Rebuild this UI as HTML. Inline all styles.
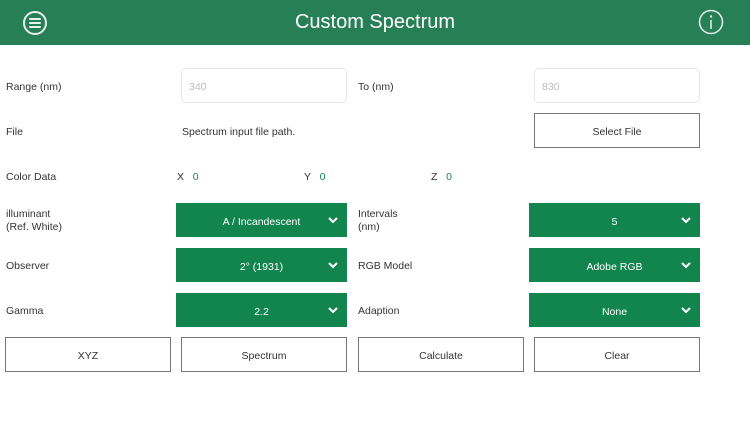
<!DOCTYPE html>
<html><head><style>
body{margin:0;width:750px;height:422px;background:#fff;font-family:"Liberation Sans",sans-serif;position:relative;overflow:hidden;color:#333}
.a{position:absolute;box-sizing:border-box}
.hdr{left:0;top:0;width:750px;height:45px;background:#277f55}
.t{color:#fff;font-size:20px;left:0;width:750px;text-align:center;top:11px;font-weight:300}
.l{font-size:10.5px;color:#333}
.in{border:1px solid #e6e6e6;border-radius:5px;font-size:10.5px;color:#bbb;padding:12px 0 0 7px}
.dd{background:#12854f;color:#fff;font-size:10.5px;text-align:center;line-height:34px;height:34px;padding-top:2px}
.dd svg{position:absolute;right:9px;top:13px}
.bt{border:1px solid #777;font-size:10.5px;text-align:center;height:35px;line-height:33px;color:#333;padding-top:2px}
.g{color:#12854f}
</style></head><body>
<div class="a hdr"></div>
<div class="a t">Custom Spectrum</div>
<svg class="a" style="left:22px;top:10px" width="26" height="26" viewBox="0 0 26 26"><circle cx="13" cy="13" r="11" fill="none" stroke="#e8f2ec" stroke-width="2"/><path d="M8 9h10M8 13h10M8 17h10" stroke="#e8f2ec" stroke-width="2" stroke-linecap="round"/></svg>
<svg class="a" style="left:698px;top:9px" width="26" height="26" viewBox="0 0 26 26"><circle cx="13" cy="13" r="11.5" fill="none" stroke="#e8f2ec" stroke-width="1.5"/><circle cx="13" cy="7.5" r="1.2" fill="#e8f2ec"/><path d="M13 11v9" stroke="#e8f2ec" stroke-width="1.5"/></svg>

<div class="a l" style="left:6px;top:81px">Range (nm)</div>
<div class="a in" style="left:181px;top:68px;width:166px;height:35px">340</div>
<div class="a l" style="left:358px;top:81px">To (nm)</div>
<div class="a in" style="left:534px;top:68px;width:166px;height:35px">830</div>

<div class="a l" style="left:6px;top:126px">File</div>
<div class="a l" style="left:182px;top:126px">Spectrum input file path.</div>
<div class="a bt" style="left:534px;top:113px;width:166px">Select File</div>

<div class="a l" style="left:6px;top:171px">Color Data</div>
<div class="a l" style="left:177px;top:171px">X &nbsp;&nbsp;<span class="g">0</span></div>
<div class="a l" style="left:304px;top:171px">Y &nbsp;&nbsp;<span class="g">0</span></div>
<div class="a l" style="left:431px;top:171px">Z &nbsp;&nbsp;<span class="g">0</span></div>

<div class="a l" style="left:6px;top:208px;line-height:13px">illuminant<br>(Ref. White)</div>
<div class="a dd" style="left:176px;top:203px;width:171px">A / Incandescent<svg width="10" height="8"><path d="M1 2l4 4 4-4" stroke="#fff" stroke-width="2" fill="none"/></svg></div>
<div class="a l" style="left:358px;top:208px;line-height:13px">Intervals<br>(nm)</div>
<div class="a dd" style="left:529px;top:203px;width:171px">5<svg width="10" height="8"><path d="M1 2l4 4 4-4" stroke="#fff" stroke-width="2" fill="none"/></svg></div>

<div class="a l" style="left:6px;top:260px">Observer</div>
<div class="a dd" style="left:176px;top:248px;width:171px">2° (1931)<svg width="10" height="8"><path d="M1 2l4 4 4-4" stroke="#fff" stroke-width="2" fill="none"/></svg></div>
<div class="a l" style="left:358px;top:260px">RGB Model</div>
<div class="a dd" style="left:529px;top:248px;width:171px">Adobe RGB<svg width="10" height="8"><path d="M1 2l4 4 4-4" stroke="#fff" stroke-width="2" fill="none"/></svg></div>

<div class="a l" style="left:6px;top:305px">Gamma</div>
<div class="a dd" style="left:176px;top:293px;width:171px">2.2<svg width="10" height="8"><path d="M1 2l4 4 4-4" stroke="#fff" stroke-width="2" fill="none"/></svg></div>
<div class="a l" style="left:358px;top:305px">Adaption</div>
<div class="a dd" style="left:529px;top:293px;width:171px">None<svg width="10" height="8"><path d="M1 2l4 4 4-4" stroke="#fff" stroke-width="2" fill="none"/></svg></div>

<div class="a bt" style="left:5px;top:337px;width:166px">XYZ</div>
<div class="a bt" style="left:181px;top:337px;width:166px">Spectrum</div>
<div class="a bt" style="left:358px;top:337px;width:166px">Calculate</div>
<div class="a bt" style="left:534px;top:337px;width:166px">Clear</div>
</body></html>
